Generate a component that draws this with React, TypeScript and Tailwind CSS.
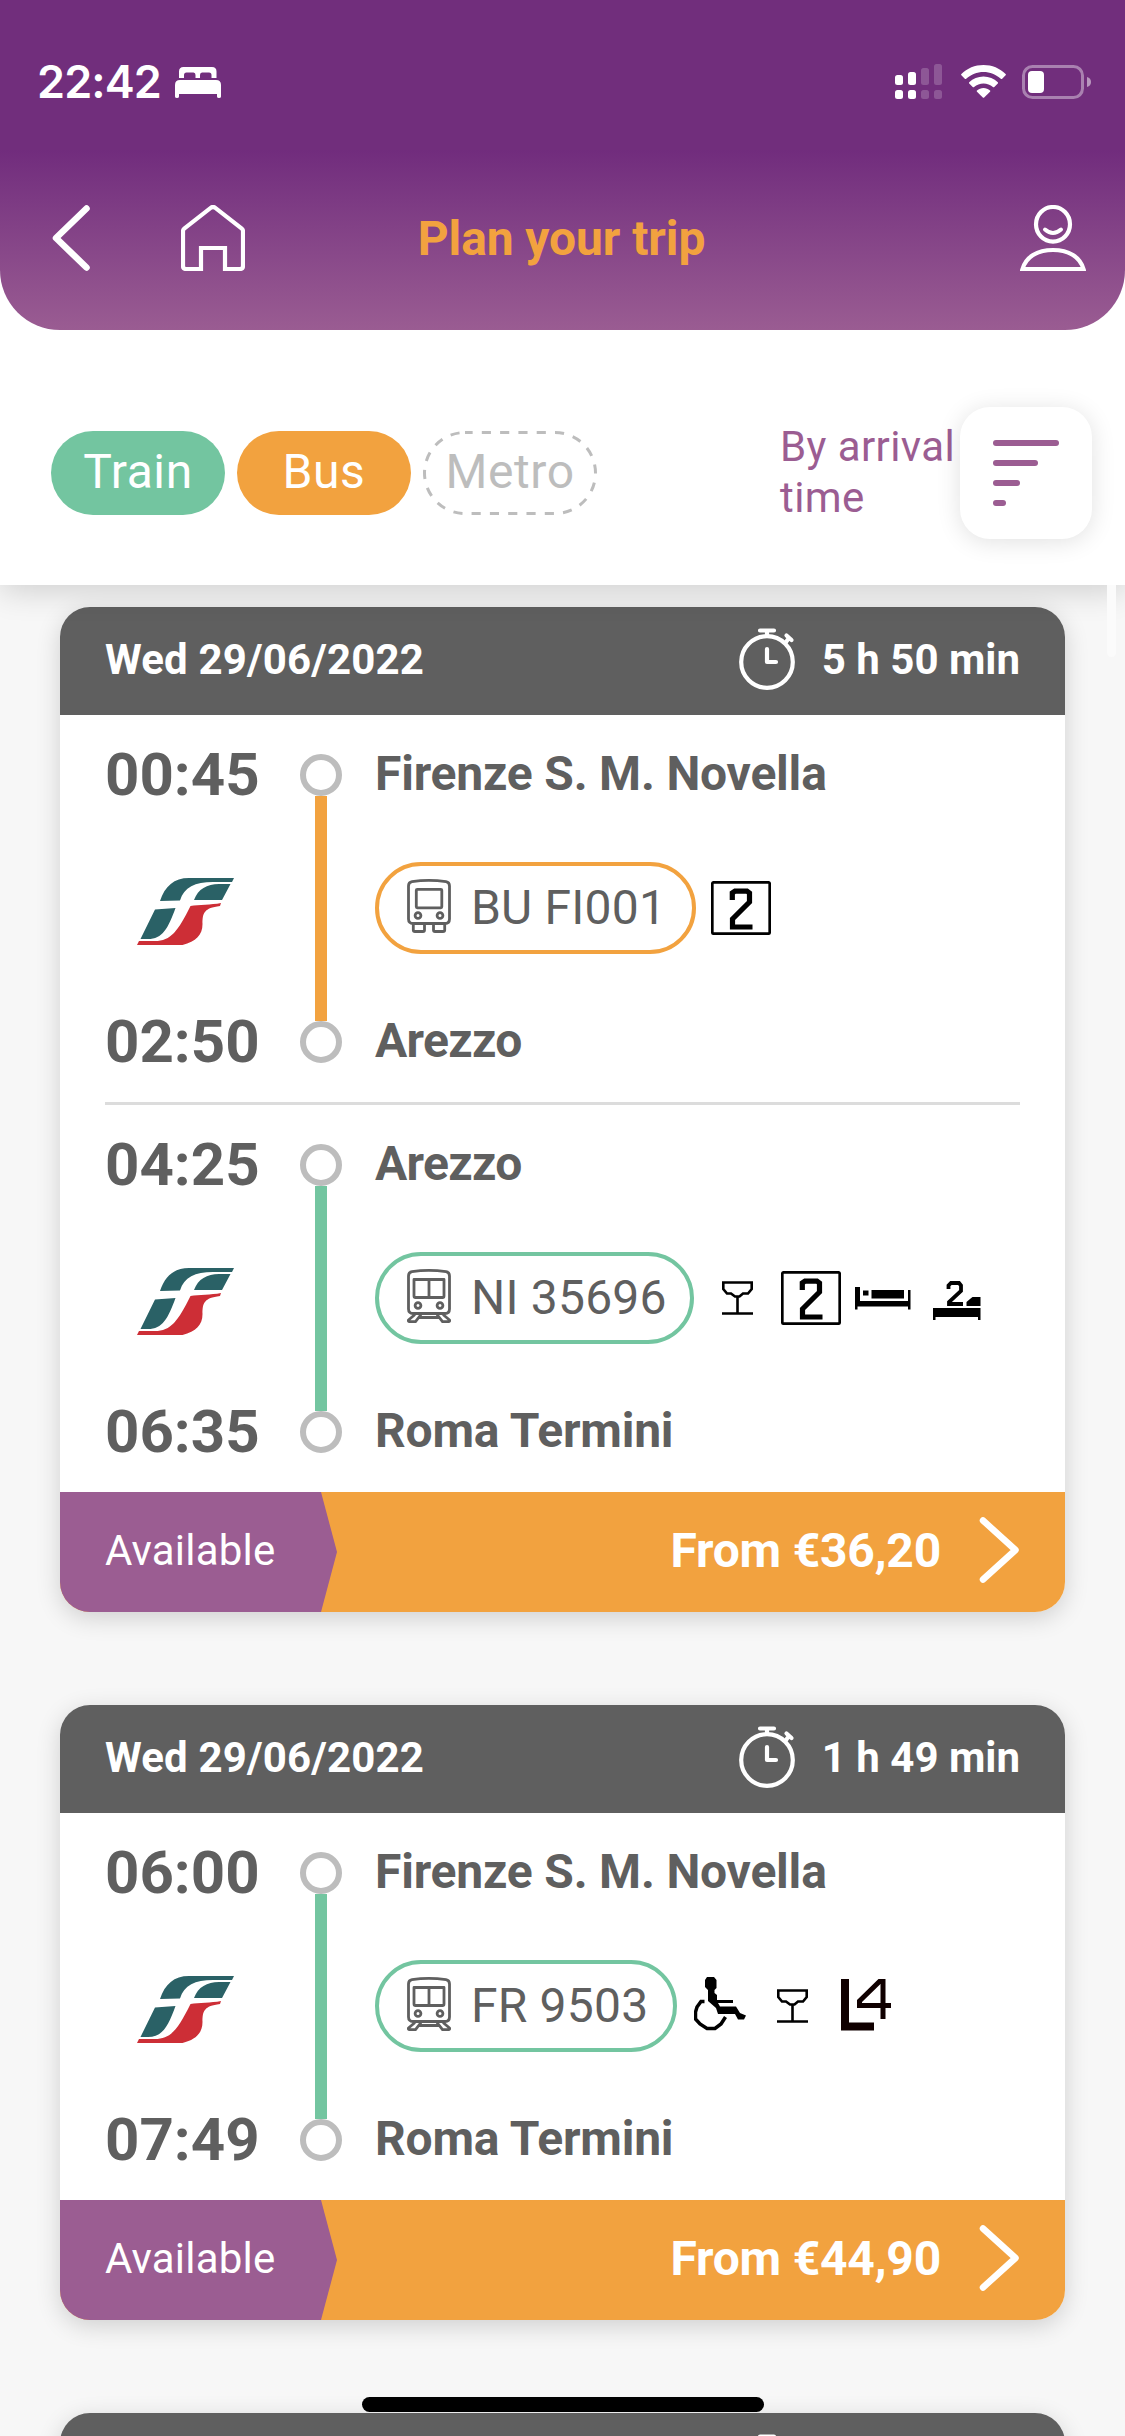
import React from "react";

type Mode = "bus" | "train";
type Service = "two" | "glass" | "bed" | "couchette" | "wheelchair" | "l4";
type Leg = {
  mode: Mode;
  dep: string;
  from: string;
  arr: string;
  to: string;
  code: string;
  pill: string;
  services: { kind: Service; gap: string }[];
};
type Trip = { date: string; duration: string; price: string; legs: Leg[] };

const trips: Trip[] = [
  {
    date: "Wed 29/06/2022",
    duration: "5 h 50 min",
    price: "From €36,20",
    legs: [
      {
        mode: "bus",
        dep: "00:45",
        from: "Firenze S. M. Novella",
        arr: "02:50",
        to: "Arezzo",
        code: "BU FI001",
        pill: "w-[321px]",
        services: [{ kind: "two", gap: "ml-[15px]" }],
      },
      {
        mode: "train",
        dep: "04:25",
        from: "Arezzo",
        arr: "06:35",
        to: "Roma Termini",
        code: "NI 35696",
        pill: "w-[319px]",
        services: [
          { kind: "glass", gap: "ml-[28px]" },
          { kind: "two", gap: "ml-[28px]" },
          { kind: "bed", gap: "ml-[14px]" },
          { kind: "couchette", gap: "ml-[22px]" },
        ],
      },
    ],
  },
  {
    date: "Wed 29/06/2022",
    duration: "1 h 49 min",
    price: "From €44,90",
    legs: [
      {
        mode: "train",
        dep: "06:00",
        from: "Firenze S. M. Novella",
        arr: "07:49",
        to: "Roma Termini",
        code: "FR 9503",
        pill: "w-[302px]",
        services: [
          { kind: "wheelchair", gap: "ml-[17px]" },
          { kind: "glass", gap: "ml-[31px]" },
          { kind: "l4", gap: "ml-[33px]" },
        ],
      },
    ],
  },
];

function StatusBar() {
  return (
    <div className="flex h-[150px] items-start bg-[#712e7c] pt-[58px] text-white">
      <span className="ml-[37px] w-[138px] font-['Inter'] text-[45px] leading-[48px] font-semibold tracking-[-0.9px]">22:42</span>
      <svg className="mt-[9px] h-[31px] w-[46px] shrink-0" viewBox="0 0 46 31" fill="currentColor">
        <path d="M4 11V4.500Q4 0 8.500 0H37Q41.500 0 41.500 4.500V11H36.500V8Q36.500 5.500 34 5.500H27Q25 5.500 25 8V11H20.500V8Q20.500 5.500 18.500 5.500H11.500Q9 5.500 9 8V11Z" />
        <path d="M0 29.500V18Q0 13 5 13H41Q46 13 46 18V29.500Q46 31 44 31Q42 31 42 29.500V27H4V29.500Q4 31 2 31Q0 31 0 29.500Z" />
      </svg>
      <svg className="mt-[6px] ml-auto h-[35px] w-[47px]" viewBox="0 0 47 35" fill="currentColor">
        <rect x="0" y="11" width="8" height="10" rx="2.500" />
        <rect x="13" y="8" width="8" height="13" rx="2.500" />
        <rect x="26" y="4" width="8" height="17" rx="2.500" opacity=".2" />
        <rect x="39" y="0" width="8" height="21" rx="2.500" opacity=".2" />
        <rect x="0" y="26" width="8" height="9" rx="2.500" />
        <rect x="13" y="26" width="8" height="9" rx="2.500" />
        <rect x="26" y="26" width="8" height="9" rx="2.500" opacity=".2" />
        <rect x="39" y="26" width="8" height="9" rx="2.500" opacity=".2" />
      </svg>
      <svg className="mt-[7px] ml-[19px] h-[33px] w-[45px]" viewBox="0 0 45 33" fill="currentColor">
        <path d="M22.500 0C31 0 39 3.300 44.600 9Q45.200 9.700 44.600 10.300L41.200 13.800Q40.500 14.400 39.800 13.800C35 9.500 29 7 22.500 7S10 9.500 5.200 13.800Q4.500 14.400 3.800 13.800L.4 10.300Q-.2 9.700 .4 9C6 3.300 14 0 22.500 0Z" />
        <path d="M22.500 11.500C28 11.500 33 13.600 36.800 17.200Q37.400 17.900 36.800 18.500L33.300 22Q32.600 22.600 31.900 22C29.300 19.800 26 18.500 22.500 18.500S15.700 19.800 13.100 22Q12.400 22.600 11.700 22L8.200 18.500Q7.600 17.900 8.200 17.200C12 13.600 17 11.500 22.500 11.500Z" />
        <path d="M22.500 23C25 23 27.200 23.900 29 25.400Q29.600 26 29 26.700L23.200 32.500Q22.500 33.200 21.800 32.500L16 26.700Q15.400 26 16 25.400C17.800 23.900 20 23 22.500 23Z" />
      </svg>
      <svg className="mt-[7px] mr-[34px] ml-[16px] h-[34px] w-[69px]" viewBox="0 0 69 34">
        <rect x="1.500" y="1.500" width="59" height="31" rx="9" fill="none" stroke="#fff" strokeOpacity=".4" strokeWidth="3" />
        <rect x="6" y="6" width="16" height="22" rx="4" fill="#fff" />
        <path d="M65 12Q69 13 69 17T65 22Z" fill="#fff" fillOpacity=".5" />
      </svg>
    </div>
  );
}

function Header() {
  return (
    <header className="relative z-20 bg-white">
      <div className="overflow-hidden rounded-b-[60px]">
        <StatusBar />
        <nav className="flex h-[180px] items-start bg-linear-to-b from-[#712c7d] to-[#9a5c92] pt-[55px] text-white">
          <svg className="ml-[52px] h-[66px] w-[38px]" viewBox="0 0 38 66" fill="none" stroke="currentColor" strokeWidth="6.500" strokeLinecap="round" strokeLinejoin="round">
            <path d="M34.500 3.500L4 33L34.500 62.500" />
          </svg>
          <svg className="ml-[91px] h-[66px] w-[64px]" viewBox="0 0 64 66" fill="none" stroke="currentColor" strokeWidth="4.200">
            <path d="M20 64V43H44V64H59Q62 64 62 61V26Q62 24.500 60.500 23.300L34 2.700Q32 1.300 30 2.700L3.500 23.300Q2 24.500 2 26V61Q2 64 5 64Z" />
          </svg>
          <h1 className="mt-px w-[633px] text-center font-['Roboto'] text-[48px] leading-[66px] font-bold tracking-[-0.1px] text-[#f2a23f]">Plan your trip</h1>
          <svg className="mr-[39px] ml-auto h-[66px] w-[66px]" viewBox="0 0 66 66" fill="none" stroke="currentColor" strokeWidth="4.200">
            <ellipse cx="33" cy="19.300" rx="17" ry="17.300" />
            <path d="M25 24.500Q33 31.500 41 24.500" strokeLinecap="round" strokeWidth="4" />
            <path d="M2.500 64C6 52 17 45 33 45S60 52 63.500 64Z" />
          </svg>
        </nav>
      </div>
    </header>
  );
}

function Filters() {
  return (
    <section className="relative z-10 flex h-[255px] items-start bg-white pt-[77px] pl-[51px] shadow-[0_6px_30px_rgba(0,0,0,0.16)]">
      <div className="mt-[24px] flex gap-[12px] text-[48px] leading-[81px] tracking-[0.6px] text-white">
        <div className="h-[84px] w-[174px] rounded-full bg-[#73c5a0] text-center">Train</div>
        <div className="h-[84px] w-[174px] rounded-full bg-[#f2a23f] text-center">Bus</div>
        <div className="relative h-[84px] w-[174px] text-center text-[#bdbdbd]">
          <svg className="absolute inset-0" width="174" height="84" fill="none">
            <rect x="1.500" y="1.500" width="171" height="81" rx="40.500" stroke="#bdbdbd" strokeWidth="3" strokeDasharray="9.150 9.150" strokeDashoffset="1.500" />
          </svg>
          Metro
        </div>
      </div>
      <p className="mt-[14px] ml-[183px] w-[180px] text-[42px] leading-[51px] tracking-[0.4px] text-[#9b5d92]">By arrival time</p>
      <button className="h-[132px] w-[132px] rounded-[30px] bg-white pl-[33px] shadow-[0_3px_24px_rgba(0,0,0,0.12)]">
        <span className="mb-[14px] block h-[6px] w-[66px] rounded-full bg-[#9b5d92]" />
        <span className="mb-[14px] block h-[6px] w-[45px] rounded-full bg-[#9b5d92]" />
        <span className="mb-[14px] block h-[6px] w-[27px] rounded-full bg-[#9b5d92]" />
        <span className="block h-[6px] w-[13px] rounded-full bg-[#9b5d92]" />
      </button>
    </section>
  );
}

function Stopwatch() {
  return (
    <svg className="h-[62px] w-[56px]" viewBox="0 0 56 62" fill="none" stroke="#fff" strokeWidth="4.200" strokeLinecap="round" strokeLinejoin="round">
      <circle cx="28" cy="34" r="25.800" />
      <path d="M28 8V3M21 2.500H35" />
      <path d="M28 21V34H37" />
      <path d="M47 14L50 10M47.500 7.500L52.500 12" />
    </svg>
  );
}

function OperatorLogo() {
  return (
    <svg className="h-[67px] w-[97px]" viewBox="0 0 97 67">
      <path d="M23 23C28 8 37 0 52 0H97L95 4H76C58 4 47 9 43 22.500Z" fill="#2a6166" />
      <path d="M57 22C61 11 70 6 82 6H93.500L85 22Z" fill="#2a6166" />
      <path d="M18 31.500L38.500 30C31 51 25 62 9 61H3.500Z" fill="#2a6166" />
      <path d="M53.500 28C62 26.500 74 27 84 25L83 28C67 30 65.500 35 65.500 46C65.500 57 59 63.500 45.500 67H0L2 63H18C34 63 41 53 53.500 28Z" fill="#cd2e36" />
    </svg>
  );
}

function VehicleIcon({ mode }: { mode: Mode }) {
  return (
    <svg className="h-[54px] w-[44px]" viewBox="0 0 44 54" fill="none" stroke="#5f5f5f" strokeWidth="2.800" strokeLinejoin="round">
      <path d="M1.500 7Q1.500 3.300 5 2.700Q21.500 .2 39 2.700Q42.500 3.300 42.500 7V40Q42.500 44.500 38 44.500H6Q1.500 44.500 1.500 40Z" />
      <circle cx="11" cy="36.500" r="2.900" />
      <circle cx="33" cy="36.500" r="2.900" />
      {mode === "bus" ? (
        <>
          <rect x="9.300" y="10.300" width="25.500" height="18.500" rx="1" />
          <path d="M6.300 45V51Q6.300 52.500 8 52.500H16Q17.500 52.500 17.500 51V45M26.500 45V51Q26.500 52.500 28 52.500H36Q37.700 52.500 37.700 51V45" />
        </>
      ) : (
        <path d="M7 10.500H37V27Q37 28.500 35.500 28.500H8.500Q7 28.500 7 27ZM22 10.500V28.500M12 48.500H32M8 45.500L1.500 51Q1 52.600 2.500 52.600H8.500L14 45.500M36 45.500L42.500 51Q43 52.600 41.500 52.600H35.500L30 45.500" />
      )}
    </svg>
  );
}

function ServiceIcon({ kind }: { kind: Service }) {
  switch (kind) {
    case "two":
      return (
        <svg className="h-[54px] w-[60px]" viewBox="0 0 60 54" fill="none" stroke="#000">
          <rect x="1.300" y="1.300" width="57.400" height="51.400" rx="1.500" strokeWidth="2.700" />
          <path d="M21.300 19V12L24 10.200H36L38.500 12V21L21.500 38V46H41.500" strokeWidth="5.200" />
        </svg>
      );
    case "glass":
      return (
        <svg className="h-[34px] w-[31px]" viewBox="0 0 31 34" fill="none" stroke="#000" strokeWidth="2.600">
          <path d="M1.300 1.500H29.700V8L26 12.500H21L17.500 15.500H13L9 12.500H5L1.300 8ZM15.500 15.500V32M0 32.500H31" />
        </svg>
      );
    case "bed":
      return (
        <svg className="h-[23px] w-[56px]" viewBox="0 0 56 23">
          <path d="M0 0H5V14H53V3H55.500V22.500H53V19.500H2.500V22.500H0ZM8 3.500H13.500V8.500H8ZM16.500 3H49V11.500H16.500Z" />
        </svg>
      );
    case "couchette":
      return (
        <svg className="mt-[5px] h-[39px] w-[48px]" viewBox="0 0 48 39">
          <path d="M0 27H47.500V39H45V36H2.500V39H0ZM37 18L39.500 16H47.500V25H33.500V21Z" />
          <path d="M15.500 8V4.500L18 2H26L28 4.500V10L16 21V23H30" fill="none" stroke="#000" strokeWidth="3.800" />
        </svg>
      );
    case "wheelchair":
      return (
        <svg className="-mt-[3px] h-[55px] w-[52px]" viewBox="0 0 52 55">
          <path d="M13 0H20L22.500 3V11L20.500 13V16L23 18V23H39V26H24L26 29.500H42L46 36L52 38.500L50 42.500H44L41 37H24L22 31L14 24V13L11 10V3Z" />
          <path d="M10.500 24.500H7L3 30L1.500 35V42L6 47L13 51.500H21L27 47L31.500 40" fill="none" stroke="#000" strokeWidth="3.500" />
        </svg>
      );
    case "l4":
      return (
        <svg className="-mt-[3px] h-[52px] w-[50px]" viewBox="0 0 50 52" fill="none" stroke="#100000">
          <path d="M4 0V47.500H33" strokeWidth="8" />
          <path d="M42 40V2.500H38.500L18.500 22V26.500H50" strokeWidth="5" />
        </svg>
      );
  }
}

function Stop({ time, name }: { time: string; name: string }) {
  return (
    <div className="flex h-[42px] items-center font-bold text-[#5f5f5f]">
      <span className="w-[195px] text-[60px] leading-[42px]">{time}</span>
      <span className="h-[42px] w-[42px] rounded-full border-[6px] border-[#bdbdbd]" />
      <span className={`ml-[33px] -mt-[3px] text-[48px] leading-[42px] whitespace-nowrap ${name === "Arezzo" ? "tracking-[-0.7px]" : "tracking-[-0.2px]"}`}>{name}</span>
    </div>
  );
}

function LegRow({ leg }: { leg: Leg }) {
  const bus = leg.mode === "bus";
  return (
    <div className="py-[39px]">
      <Stop time={leg.dep} name={leg.from} />
      <div className="flex h-[225px] items-center">
        <div className="ml-[32px] w-[178px] pt-[5px]">
          <OperatorLogo />
        </div>
        <div className={`h-full w-[12px] ${bus ? "bg-[#f2a23f]" : "bg-[#73c5a0]"}`} />
        <div className={`mb-px ml-[48px] flex h-[92px] shrink-0 items-center rounded-full border-4 pl-[28px] ${leg.pill} ${bus ? "border-[#f2a23f]" : "border-[#73c5a0]"}`}>
          <div className="-mt-[5px]">
            <VehicleIcon mode={leg.mode} />
          </div>
          <span className="ml-[20px] text-[48px] leading-[84px] tracking-[0.2px] whitespace-nowrap text-[#5f5f5f]">{leg.code}</span>
        </div>
        {leg.services.map((s) => (
          <div key={s.kind} className={`mb-px shrink-0 ${s.gap}`}>
            <ServiceIcon kind={s.kind} />
          </div>
        ))}
      </div>
      <Stop time={leg.arr} name={leg.to} />
    </div>
  );
}

function TripCard({ trip }: { trip: Trip }) {
  return (
    <article className="mx-[60px] mb-[93px] shrink-0 overflow-hidden rounded-[30px] bg-white shadow-[0_6px_24px_rgba(0,0,0,0.16)]">
      <div className="flex h-[108px] items-center bg-[#5f5f5f] px-[45px] text-[42px] font-bold text-white">
        <span className="-mt-[4px] tracking-[0.15px]">{trip.date}</span>
        <span className="-mt-[5px] mr-[27px] ml-auto">
          <Stopwatch />
        </span>
        <span className="-mt-[4px]">{trip.duration}</span>
      </div>
      <div className="px-[45px]">
        {trip.legs.map((leg, i) => (
          <React.Fragment key={leg.code}>
            {i > 0 && <div className="h-[3px] bg-[#dcdcdc]" />}
            <LegRow leg={leg} />
          </React.Fragment>
        ))}
      </div>
      <div className="flex h-[120px] items-center bg-[#f2a23f] text-white">
        <div className="h-full w-[277px] bg-[#9b5d92] pl-[45px] text-[42px] leading-[117px] tracking-[0.2px] [clip-path:polygon(0_0,261px_0,100%_50%,261px_100%,0_100%)]">Available</div>
        <span className="-mt-[4px] mr-[38px] ml-auto text-[48px] leading-[117px] font-bold tracking-[-0.2px]">{trip.price}</span>
        <svg className="-mt-[4px] mr-[45px] h-[66px] w-[41px]" viewBox="0 0 41 66" fill="none" stroke="currentColor" strokeWidth="6.500" strokeLinecap="round" strokeLinejoin="round">
          <path d="M4 3.500L36.500 33L4 62.500" />
        </svg>
      </div>
    </article>
  );
}

export default function App() {
  return (
    <div className="relative flex h-[2436px] w-[1125px] flex-col overflow-hidden bg-[#f7f7f7] font-['Roboto',sans-serif]">
      <Header />
      <Filters />
      <main className="flex min-h-0 flex-1 flex-col overflow-hidden pt-[22px]">
        {trips.map((t) => (
          <TripCard key={t.duration} trip={t} />
        ))}
        <article className="mx-[60px] h-[108px] shrink-0 rounded-t-[30px] bg-[#5f5f5f] pt-[21px] pl-[679px] shadow-[0_6px_24px_rgba(0,0,0,0.16)]">
          <Stopwatch />
        </article>
      </main>
      <div className="absolute top-[585px] right-[9px] z-20 h-[72px] w-[9px] rounded-b-full bg-[#fbfbfb]" />
      <div className="absolute bottom-[24px] left-[362px] z-20 h-[15px] w-[402px] rounded-full bg-black" />
    </div>
  );
}
